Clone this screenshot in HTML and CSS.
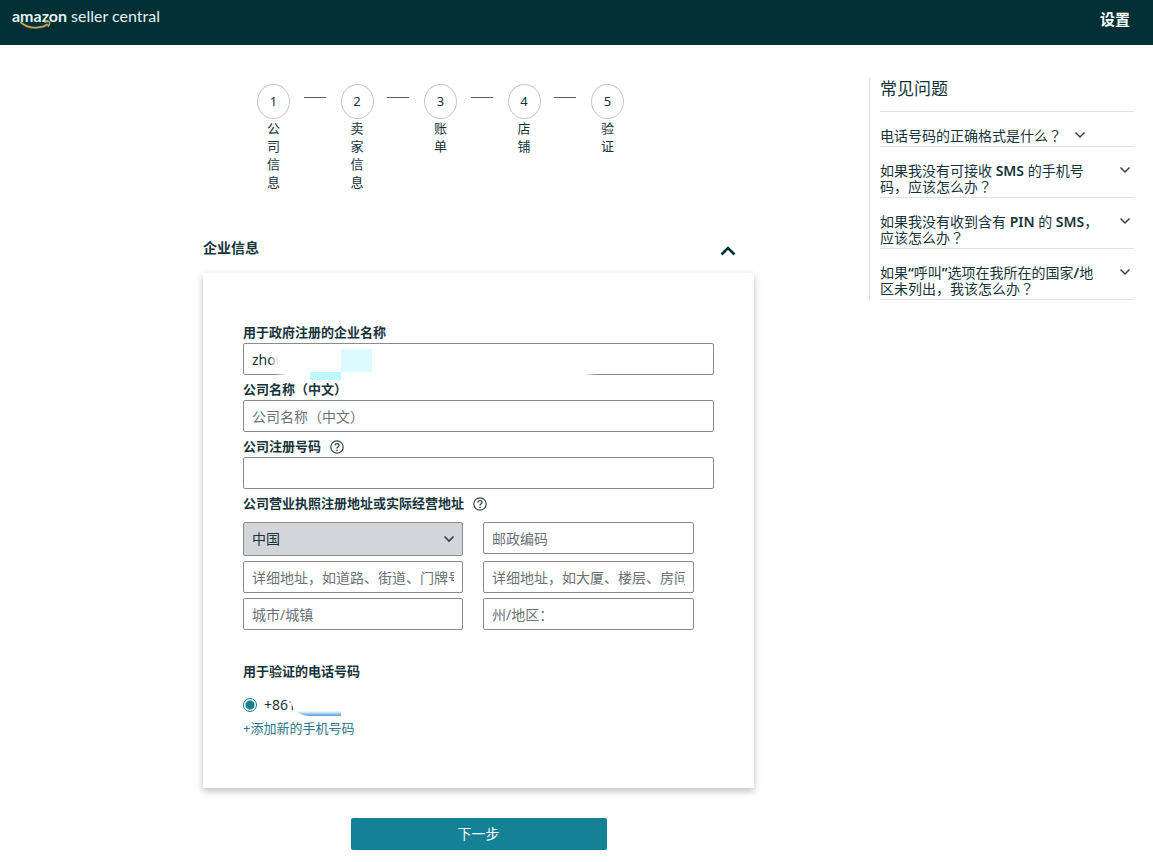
FILE: index.html
```html
<!DOCTYPE html>
<html lang="zh-CN">
<head>
<meta charset="utf-8">
<title>amazon seller central</title>
<link rel="stylesheet" href="styles.css">
</head>
<body>
<header class="topbar">
  <div class="logo">
    <span class="logo-name">amazon</span>
    <span class="logo-product">seller central</span>
    <svg class="logo-smile" width="32" height="9" viewBox="0 0 32 9" aria-hidden="true"><path d="M1 1.500c7 6.500 19 6.500 26.500 2" fill="none" stroke="#c2a35c" stroke-width="2" stroke-linecap="round"/><path d="M25 1.200c2-.700 4-.700 4.500-.200s0 2.800-1.200 4.200" fill="none" stroke="#c2a35c" stroke-width="1.400" stroke-linecap="round"/></svg>
  </div>
  <button class="settings" type="button">设置</button>
</header>
<div class="page">
  <main class="main">
    <ol class="steps">
      <li class="step"><span class="step-number">1</span><span class="step-label">公司信息</span></li>
      <li class="step"><span class="step-number">2</span><span class="step-label">卖家信息</span></li>
      <li class="step"><span class="step-number">3</span><span class="step-label">账单</span></li>
      <li class="step"><span class="step-number">4</span><span class="step-label">店铺</span></li>
      <li class="step"><span class="step-number">5</span><span class="step-label">验证</span></li>
    </ol>
    <form class="form">
      <div class="section-head">
        <h1 class="section-title">企业信息</h1>
        <button class="collapse" type="button" aria-label="收起"><svg width="18" height="12" viewBox="0 0 18 12"><path d="M2.500 9.500 9 3l6.500 6.500" fill="none" stroke="#002f36" stroke-width="2.600"/></svg></button>
      </div>
      <div class="card">
        <label class="label" for="name">用于政府注册的企业名称</label>
        <div class="masked-field">
          <input class="input" id="name" type="text" value="zhon">
          <span class="mask mask-text"></span>
          <span class="mask mask-edge"></span>
          <span class="mask mask-pale"></span>
          <span class="mask mask-cyan"></span>
        </div>
        <label class="label" for="cn-name">公司名称（中文）</label>
        <input class="input" id="cn-name" type="text" placeholder="公司名称（中文）">
        <div class="label-row">
          <label class="label" for="reg">公司注册号码</label>
          <button class="help" type="button" aria-label="帮助"><svg width="14" height="14" viewBox="0 0 14 14"><circle cx="7" cy="7" r="6.200" fill="none" stroke="#34474c" stroke-width="1.200"/><path d="M5 5.600C5 3 9 3 9 5.400 9 6.900 7 6.800 7 8.600" fill="none" stroke="#34474c" stroke-width="1.300"/><circle cx="7" cy="10.300" r=".85" fill="#34474c"/></svg></button>
        </div>
        <input class="input" id="reg" type="text">
        <div class="label-row">
          <span class="label" id="address-label">公司营业执照注册地址或实际经营地址</span>
          <button class="help" type="button" aria-label="帮助"><svg width="14" height="14" viewBox="0 0 14 14"><circle cx="7" cy="7" r="6.200" fill="none" stroke="#34474c" stroke-width="1.200"/><path d="M5 5.600C5 3 9 3 9 5.400 9 6.900 7 6.800 7 8.600" fill="none" stroke="#34474c" stroke-width="1.300"/><circle cx="7" cy="10.300" r=".85" fill="#34474c"/></svg></button>
        </div>
        <div class="address" role="group" aria-labelledby="address-label">
          <div class="select-wrap">
            <select class="select" aria-label="国家/地区"><option>中国</option></select>
            <svg class="select-arrow" width="12" height="8" viewBox="0 0 12 8" aria-hidden="true"><path d="M1.500 1.500 6 6l4.500-4.500" fill="none" stroke="#33424a" stroke-width="1.700"/></svg>
          </div>
          <input class="input" type="text" placeholder="邮政编码" aria-label="邮政编码">
          <input class="input" type="text" placeholder="详细地址，如道路、街道、门牌号等" aria-label="详细地址一">
          <input class="input" type="text" placeholder="详细地址，如大厦、楼层、房间号等" aria-label="详细地址二">
          <input class="input" type="text" placeholder="城市/城镇" aria-label="城市/城镇">
          <input class="input" type="text" placeholder="州/地区：" aria-label="州/地区">
        </div>
        <h2 class="phone-title">用于验证的电话号码</h2>
        <label class="phone">
          <input class="radio" type="radio" name="phone" checked>
          <span>+861</span>
          <span class="mask mask-phone"></span>
        </label>
        <a class="add-phone" href="#">+添加新的手机号码</a>
      </div>
      <button class="next" type="submit">下一步</button>
    </form>
  </main>
  <aside class="faq">
    <h2 class="faq-title">常见问题</h2>
    <button class="faq-item faq-item-short" type="button"><span>电话号码的正确格式是什么<span lang="ja">？</span></span><svg width="12" height="8" viewBox="0 0 12 8"><path d="M1.500 1.500 6 6l4.500-4.500" fill="none" stroke="#33424a" stroke-width="1.500"/></svg></button>
    <button class="faq-item" type="button"><span>如果我没有可接收 <b>SMS</b> 的手机号<br>码，应该怎么办<span lang="ja">？</span></span><svg width="12" height="8" viewBox="0 0 12 8"><path d="M1.500 1.500 6 6l4.500-4.500" fill="none" stroke="#33424a" stroke-width="1.500"/></svg></button>
    <button class="faq-item" type="button"><span>如果我没有收到含有 <b>PIN</b> 的 <b>SMS</b>，<br>应该怎么办<span lang="ja">？</span></span><svg width="12" height="8" viewBox="0 0 12 8"><path d="M1.500 1.500 6 6l4.500-4.500" fill="none" stroke="#33424a" stroke-width="1.500"/></svg></button>
    <button class="faq-item" type="button"><span>如果<b>“</b>呼叫<b>”</b>选项在我所在的国家<b>/</b>地<br>区未列出，我该怎么办<span lang="ja">？</span></span><svg width="12" height="8" viewBox="0 0 12 8"><path d="M1.500 1.500 6 6l4.500-4.500" fill="none" stroke="#33424a" stroke-width="1.500"/></svg></button>
  </aside>
</div>
</body>
</html>
```

FILE: styles.css
```css
* {
  box-sizing: border-box;
}

body {
  margin: 0;
  background: #fff;
  color: #16333a;
  font: 14px/20px "Noto Sans", "Noto Sans CJK SC", sans-serif;
}

button,
input,
select {
  font: inherit;
  color: inherit;
}

button {
  border: 0;
  padding: 0;
  background: none;
  cursor: pointer;
}

h1,
h2,
ol {
  margin: 0;
  padding: 0;
}

/* Top bar */
.topbar {
  display: flex;
  justify-content: space-between;
  align-items: flex-start;
  height: 45px;
  padding: 6px 23px 0 12px;
  background: #002f36;
  color: #e4f2f2;
}

.logo {
  position: relative;
  display: flex;
  gap: 4px;
  font: 16px/20px Lato, sans-serif;
}

.logo-name {
  font-weight: 700;
}

.logo-smile {
  position: absolute;
  left: 8px;
  top: 15px;
}

.settings {
  padding-top: 3px;
  font-size: 15px;
  font-weight: 700;
  color: #fff;
}

/* Page columns */
.page {
  display: grid;
  grid-template-columns: 203fr 551fr 115fr 265fr 19fr;
  align-items: start;
}

.main {
  grid-column: 2;
  padding-top: 39px;
}

/* Steps */
.steps {
  display: flex;
  justify-content: space-between;
  min-height: 144px;
  padding: 0 130px 0 54px;
  list-style: none;
}

.step {
  position: relative;
  display: flex;
  flex-direction: column;
  align-items: center;
}

.step + .step::before {
  content: "";
  position: absolute;
  top: 13px;
  right: 48px;
  width: 22px;
  border-top: 1px solid #555f62;
}

.step-number {
  width: 33px;
  height: 35px;
  border: 1px solid #c4c8c9;
  border-radius: 50%;
  font-size: 13px;
  line-height: 33px;
  text-align: center;
}

.step-label {
  width: 13px;
  font-size: 13px;
  line-height: 18px;
}

/* Form */
.section-head {
  display: flex;
  justify-content: space-between;
  align-items: center;
  height: 45px;
  padding: 0 17px 6px 0;
}

.section-title {
  font-size: 14px;
  line-height: 20px;
}

.collapse {
  display: flex;
  padding-top: 6px;
}

.card {
  padding: 45px 40px 50px;
  background: #fff;
  box-shadow: 0 3px 7px rgba(0, 0, 0, 0.26);
}

.label {
  display: block;
  height: 25px;
  padding-top: 4px;
  font-size: 13px;
  font-weight: 700;
  line-height: 20px;
}

.label-row {
  display: flex;
  gap: 9px;
}

.help {
  display: flex;
  align-items: center;
  padding-top: 5px;
}

.input,
.select {
  display: block;
  width: 100%;
  height: 32px;
  margin: 0;
  padding: 0 8px;
  border: 1px solid #878c8e;
  border-radius: 2px;
  background: #fff;
}

.input::placeholder {
  color: #6a7276;
  opacity: 1;
}

.address {
  display: grid;
  grid-template-columns: 220fr 211fr;
  gap: 5px 20px;
  align-items: start;
  padding: 8px 20px 0 0;
}

.select-wrap {
  position: relative;
}

.select {
  height: 34px;
  appearance: none;
  background: #d2d5d9;
}

.select-arrow {
  position: absolute;
  right: 8px;
  top: 13px;
  pointer-events: none;
}

.phone-title {
  margin-top: 31px;
  font-size: 13px;
  line-height: 20px;
}

.phone {
  position: relative;
  display: flex;
  align-items: center;
  gap: 7px;
  margin-top: 14px;
}

.radio {
  appearance: none;
  width: 14px;
  height: 14px;
  margin: 0;
  border: 1px solid #16808f;
  border-radius: 50%;
  background: radial-gradient(circle, #16808f 4px, #fff 5px);
}

.add-phone {
  display: block;
  margin-top: 3px;
  color: #2b7787;
  font-size: 13px;
  text-decoration: none;
}

/* Redacted parts of the personal data */
.masked-field {
  position: relative;
}

.mask {
  position: absolute;
  pointer-events: none;
}

.mask-text {
  left: 28px;
  top: 4px;
  width: 18px;
  height: 24px;
  background: linear-gradient(90deg, rgba(255, 255, 255, 0.3), #fff 8px);
}

.mask-edge {
  left: 32px;
  right: 118px;
  bottom: 0;
  height: 2px;
  background: linear-gradient(90deg, transparent, #fff 12px, #fff calc(100% - 12px), transparent);
}

.mask-pale {
  left: 98px;
  top: 6px;
  width: 31px;
  height: 23px;
  background: #dcfbff;
}

.mask-cyan {
  left: 67px;
  top: 29px;
  width: 31px;
  height: 8px;
  background: #bdfaff;
}

.mask-phone {
  left: 47px;
  top: 2px;
  width: 51px;
  height: 19px;
  border-radius: 0 0 0 20px;
  background: linear-gradient(#fff 14px, #4d9ed8);
}

.next {
  display: block;
  width: 256px;
  height: 32px;
  margin: 30px auto 12px;
  border-radius: 2px;
  background: #148196;
  color: #fff;
}

/* FAQ */
.faq {
  grid-column: 4;
  margin-top: 33px;
  padding-left: 10px;
  border-left: 1px solid #dfe3e4;
}

.faq-title {
  height: 34px;
  border-bottom: 1px solid #dfe3e4;
  font-size: 17px;
  font-weight: 400;
  line-height: 22px;
}

.faq-item {
  display: flex;
  justify-content: space-between;
  align-items: flex-start;
  width: 100%;
  padding: 16px 3px 2px 0;
  border-bottom: 1px solid #dfe3e4;
  line-height: 16px;
  text-align: left;
  white-space: nowrap;
}

.faq-item b {
  font-weight: 600;
}

.faq-item svg {
  margin-top: 3px;
}

.faq-item-short {
  justify-content: flex-start;
  gap: 12px;
}
```
